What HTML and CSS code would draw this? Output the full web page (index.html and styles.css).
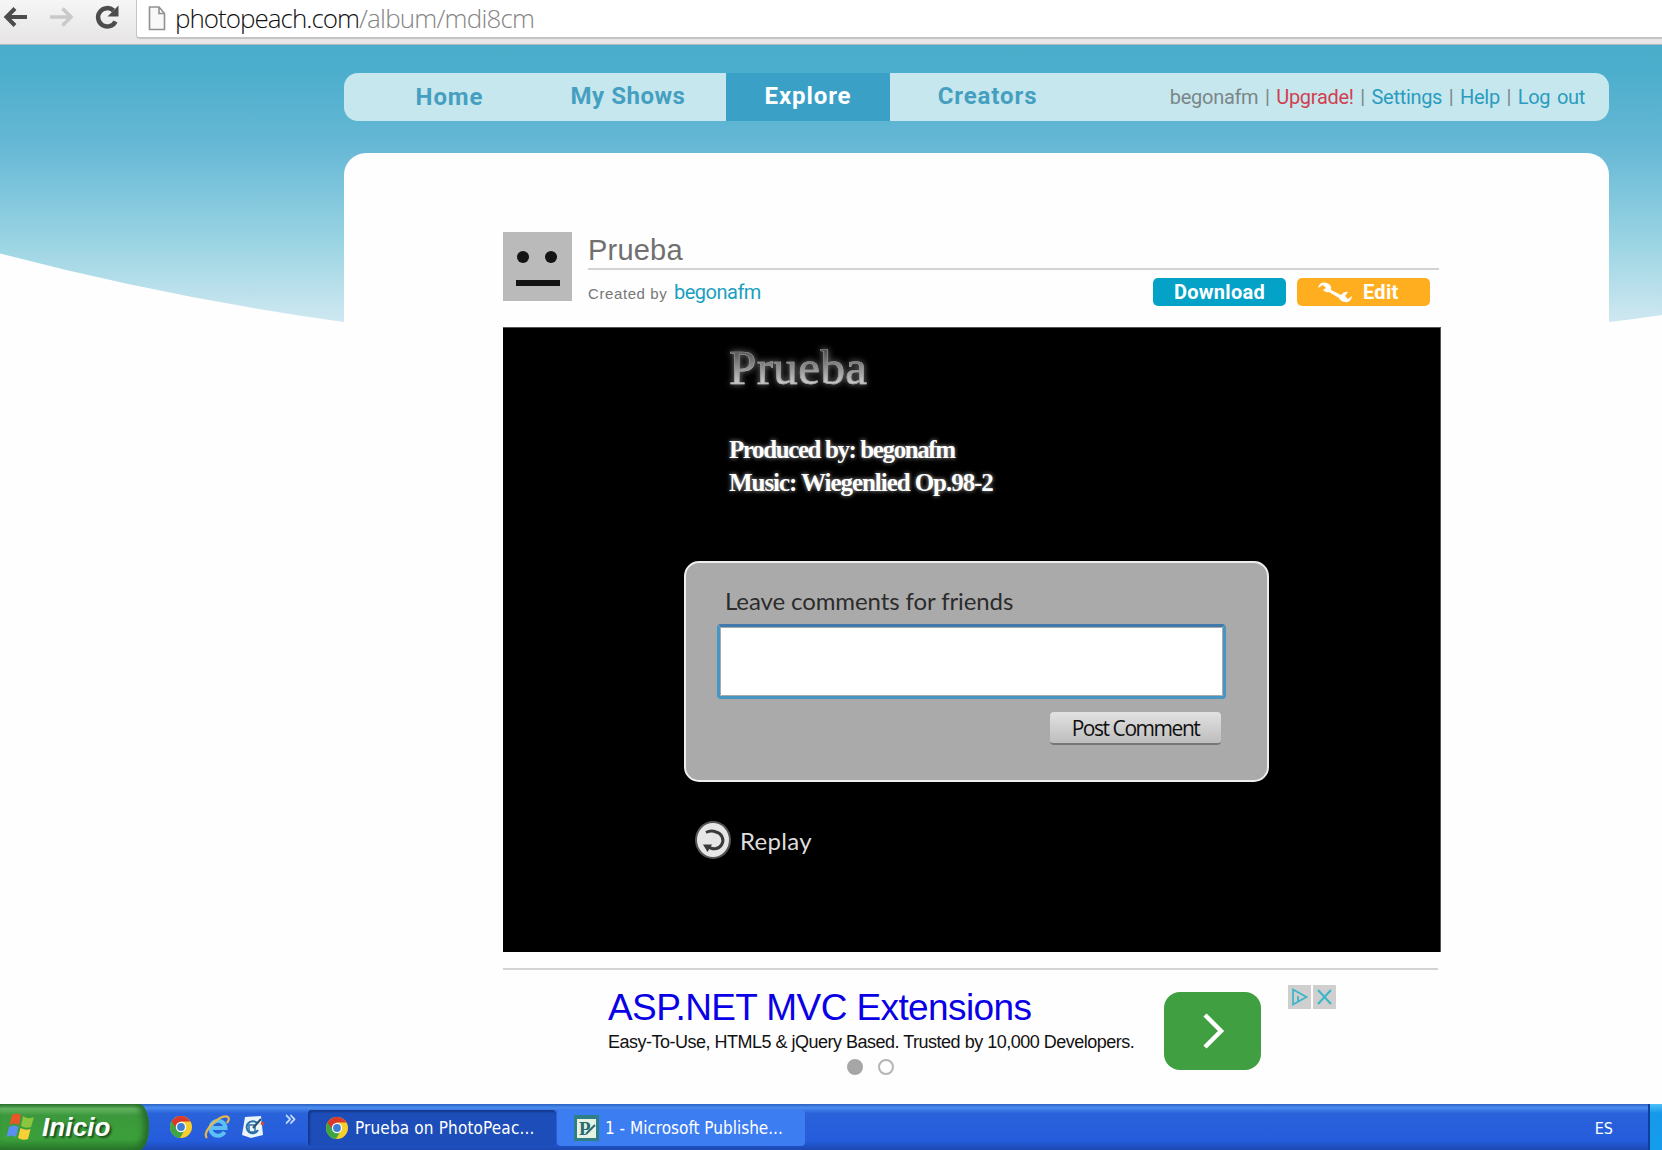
FILE: index.html
```
<!DOCTYPE html>
<html lang="en">
<head>
    <meta charset="UTF-8">
    <title>Prueba on PhotoPeach</title>
    <link rel="stylesheet" href="styles.css">
</head>
<body>
    <svg width="0" height="0" class="defs">
        <symbol id="chrome" viewBox="0 0 24 24">
            <circle cx="12" cy="12" r="11" fill="#f7cf2c"/>
            <path d="M12 12L2.500 6.500A11 11 0 0 0 11 23L16 14.500z" fill="#3fa544"/>
            <path d="M2.500 6.500A11 11 0 0 1 21.500 6.500H12L8 14z" fill="#d9392b"/>
            <circle cx="12" cy="12" r="5.200" fill="#fff"/>
            <circle cx="12" cy="12" r="3.900" fill="#3d7fd6"/>
        </symbol>
    </svg>

    <div class="browser-bar">
        <svg class="browser-icons" width="128" height="45" viewBox="0 0 128 45" fill="none">
            <path d="M27 17H7M15 8.500L6.500 17L15 25.500" stroke="#4c4c4c" stroke-width="4"/>
            <path d="M50 17H71M62.500 8.500L71 17L62.500 25.500" stroke="#c9c9c9" stroke-width="3.500"/>
            <path d="M115.500 21.500A9.200 9.200 0 1 1 113.500 10.500" stroke="#4c4c4c" stroke-width="4.500"/>
            <path d="M118.500 5.500V16.500H107.500z" fill="#4c4c4c"/>
        </svg>
        <div class="address">
            <svg width="18" height="26" viewBox="0 0 18 26"><path d="M1.500 2H11L16.500 8.500V24.500H1.500zM11 2V8.500H16.500" fill="#f8f8f8" stroke="#909090" stroke-width="1.600"/></svg>
            <span class="url">photopeach.com</span><span class="url url-path">/album/mdi8cm</span>
        </div>
    </div>

    <div class="page">
        <svg class="sky" width="1662" height="280" viewBox="0 0 1662 280">
            <defs>
                <linearGradient id="skyfill" x1="0" y1="0" x2="0" y2="1">
                    <stop offset="0" stop-color="#49aecb"/>
                    <stop offset=".1" stop-color="#4caecc"/>
                    <stop offset=".38" stop-color="#68b9d6"/>
                    <stop offset=".7" stop-color="#98d3e2"/>
                    <stop offset="1" stop-color="#cfe8f1"/>
                </linearGradient>
            </defs>
            <path d="M0 0H1662V270Q1636 274 1609 277H344Q170 253 0 208.500z" fill="url(#skyfill)"/>
        </svg>

        <div class="nav">
            <a class="tab tab-home">Home</a>
            <a class="tab tab-shows">My Shows</a>
            <a class="tab tab-explore active">Explore</a>
            <a class="tab tab-creators">Creators</a>
            <div class="user-links">begonafm | <a class="upgrade">Upgrade!</a> | <a>Settings</a> | <a>Help</a> | <a>Log out</a></div>
        </div>

        <div class="content">
            <div class="show-head">
                <svg width="69" height="69" viewBox="0 0 69 69">
                    <rect width="69" height="69" fill="#bababa"/>
                    <circle cx="20" cy="25" r="6" fill="#141414"/>
                    <circle cx="48" cy="25" r="6" fill="#141414"/>
                    <rect x="13" y="48" width="44" height="6" fill="#141414"/>
                </svg>
                <div class="show-info">
                    <h1>Prueba</h1>
                    <div class="show-meta">
                        <span class="created">Created by</span>
                        <a class="author">begonafm</a>
                        <div class="actions">
                            <button class="download">Download</button>
                            <button class="edit">
                                <svg width="36" height="22" viewBox="0 0 36 22"><path d="M1 7Q3 0 10 2Q15 4 14 9L24 14Q27 10 31 11L28 15L31 18L35 15Q34 22 28 21Q23 20 22 17L12 11Q9 12 6 9L9 7L6 4z" fill="#fff"/></svg>
                                <span>Edit</span>
                            </button>
                        </div>
                    </div>
                </div>
            </div>

            <div class="player">
                <div class="player-title">Prueba</div>
                <div class="credits">
                    <div class="produced">Produced by: begonafm</div>
                    <div class="music">Music: Wiegenlied Op.98-2</div>
                </div>
                <div class="comment-box">
                    <label>Leave comments for friends</label>
                    <textarea></textarea>
                    <button class="post">Post Comment</button>
                </div>
                <div class="replay">
                    <svg width="38" height="40" viewBox="0 0 38 40">
                        <ellipse cx="19" cy="20" rx="18" ry="19" fill="#555"/>
                        <ellipse cx="19" cy="20" rx="16" ry="17" fill="#e6e6e6"/>
                        <path d="M12 12.500Q17 10 22 12A8.500 8.500 0 1 1 14 26" fill="none" stroke="#3a3a3a" stroke-width="3"/>
                        <path d="M9 24.500H18L13.500 32z" fill="#3a3a3a"/>
                    </svg>
                    <span>Replay</span>
                </div>
            </div>

            <div class="ad">
                <div class="ad-text">
                    <a class="ad-title">ASP.NET MVC Extensions</a>
                    <div class="ad-sub">Easy-To-Use, HTML5 &amp; jQuery Based. Trusted by 10,000 Developers.</div>
                    <div class="dots"><i class="dot on"></i><i class="dot"></i></div>
                </div>
                <div class="ad-go">
                    <svg width="24" height="36" viewBox="0 0 24 36"><path d="M4 2L20 18L4 34" fill="none" stroke="#fff" stroke-width="4.500"/></svg>
                </div>
                <div class="ad-choices">
                    <svg width="23" height="24" viewBox="0 0 23 24"><rect width="23" height="24" fill="#cfcfcf"/><path d="M5 4.500L18.500 12L5 19.500zM10 11V16" fill="none" stroke="#3bb5c8" stroke-width="1.700"/></svg>
                    <svg width="23" height="24" viewBox="0 0 23 24"><rect width="23" height="24" fill="#cfcfcf"/><path d="M5 5L18 19M18 5L5 19" stroke="#3bb5c8" stroke-width="2"/></svg>
                </div>
            </div>
        </div>
    </div>

    <div class="taskbar">
        <div class="start">
            <svg width="30" height="30" viewBox="0 0 30 30">
                <path d="M6 3Q11 0 15 3L13 13Q8 10 3.500 13z" fill="#e8572a"/>
                <path d="M17 4Q22 8 28 5L25 15Q20 17 15 14z" fill="#8cc63f"/>
                <path d="M3 15Q8 12 12.500 15L10 25Q6 22 .5 25z" fill="#5b8ff0"/>
                <path d="M14.500 16Q20 19 24.500 17L22 27Q17 29 12 26z" fill="#fbcf3a"/>
            </svg>
            <span>Inicio</span>
        </div>
        <div class="quick">
            <svg width="24" height="24"><use href="#chrome"/></svg>
            <svg width="26" height="26" viewBox="0 0 26 26" fill="none">
                <path d="M20.500 18A7.500 7.500 0 1 1 21.500 14H8" stroke="#5cc0f4" stroke-width="4"/>
                <path d="M3 24Q-1 20 8 10Q19 0 24 3Q26 5 23 9" stroke="#e9b64a" stroke-width="2.200"/>
            </svg>
            <svg width="24" height="24" viewBox="0 0 24 24" fill="none">
                <path d="M4 2L20 1L22 20L10 23L1 20z" fill="#eaf5fb"/>
                <path d="M16 8A6 6 0 1 0 17 15" stroke="#2a6fa8" stroke-width="2"/>
                <path d="M8 10H14V17H8z" stroke="#2a6fa8" stroke-width="1.500"/>
                <path d="M12 13L20 4" stroke="#2b5170" stroke-width="2"/>
                <path d="M20 8L23 9" stroke="#d04a3a" stroke-width="3"/>
            </svg>
            <span class="more">»</span>
        </div>
        <div class="task current">
            <svg width="24" height="24"><use href="#chrome"/></svg>
            <span>Prueba on PhotoPeac...</span>
        </div>
        <div class="task">
            <svg width="25" height="26" viewBox="0 0 25 26">
                <rect width="25" height="26" fill="#2e7f86"/>
                <rect x="3" y="4" width="19" height="19" fill="#e6f2e4"/>
                <text x="5" y="20" font-family="Liberation Serif" font-weight="bold" font-size="19" fill="#2b6a70">P</text>
                <path d="M12 19L21 10" stroke="#2b6a70" stroke-width="2"/>
            </svg>
            <span>1 - Microsoft Publishe...</span>
        </div>
        <div class="lang">ES</div>
        <div class="tray"></div>
    </div>
</body>
</html>
```
FILE: styles.css
```
* {
    box-sizing: border-box;
}
body {
    margin: 0;
    width: 1662px;
    height: 1150px;
    display: flex;
    flex-direction: column;
    overflow: hidden;
    background: #fefefe;
    font-family: "Liberation Sans", Arial, sans-serif;
}
svg {
    display: block;
    flex: none;
}
.defs {
    position: absolute;
}
button {
    border: none;
    padding: 0;
    font-family: Roboto, sans-serif;
}

/* browser */
.browser-bar {
    height: 45px;
    flex: none;
    display: flex;
    background: linear-gradient(#f6f6f6, #e6e4e4);
    border-bottom: 1px solid #a9b9be;
}
.address {
    flex: 1;
    height: 39px;
    margin-left: 8px;
    padding-left: 11px;
    display: flex;
    align-items: flex-start;
    background: #fff;
    border: 1px solid #c4c4c4;
    border-width: 0 0 2px 1px;
    border-radius: 0 0 0 4px;
}
.address svg {
    margin: 5px 9px 0 0;
}
.url {
    font-family: "Open Sans", sans-serif;
    font-weight: 300;
    font-size: 26px;
    line-height: 36px;
    letter-spacing: -1px;
    color: #111;
}
.url-path {
    color: #858585;
    letter-spacing: -0.8px;
}

/* page */
.page {
    position: relative;
    height: 1059px;
    flex: none;
    padding: 28px 53px 0 344px;
}
.sky {
    position: absolute;
    top: 0;
    left: 0;
}
.nav {
    position: relative;
    height: 48px;
    display: flex;
    background: #c7e7ee;
    border-radius: 14px;
    line-height: 47px;
}
.tab {
    color: #459fc0;
    font-family: Roboto, sans-serif;
    font-weight: 700;
    font-size: 24px;
    letter-spacing: 0.9px;
    text-align: center;
}
.tab-home {
    width: 211px;
    line-height: 49px;
}
.tab-shows {
    width: 171px;
    padding-right: 25px;
    letter-spacing: 0.5px;
    white-space: nowrap;
}
.tab-explore {
    width: 164px;
}
.tab-creators {
    width: 195px;
}
.tab.active {
    background: #3aa0c6;
    color: #fff;
}
.user-links {
    margin-left: auto;
    padding-right: 24px;
    font-family: Roboto, sans-serif;
    font-size: 20px;
    line-height: 49px;
    letter-spacing: -0.3px;
    word-spacing: 2px;
    color: #7b8688;
    white-space: nowrap;
}
.user-links a {
    color: #2a9cbf;
}
.user-links .upgrade {
    color: #d04050;
}
.content {
    position: relative;
    margin-top: 32px;
    height: 951px;
    padding: 79px 0 0 159px;
    background: #fefefe;
    border-radius: 22px 22px 0 0;
}
.show-head {
    display: flex;
    height: 95px;
}
.show-info {
    width: 851px;
    margin-left: 16px;
}
h1 {
    margin: 0;
    height: 38px;
    border-bottom: 2px solid #d3d3d3;
    font-weight: 400;
    font-size: 29px;
    line-height: 36px;
    letter-spacing: 0.2px;
    color: #707070;
}
.show-meta {
    display: flex;
    align-items: baseline;
    height: 44px;
    padding-top: 1px;
}
.created {
    width: 86px;
    font-size: 15px;
    letter-spacing: 0.6px;
    color: #777;
    white-space: nowrap;
}
.author {
    font-family: Roboto, sans-serif;
    font-size: 20px;
    letter-spacing: -0.5px;
    color: #1a9fc0;
}
.actions {
    display: flex;
    gap: 11px;
    margin: 7px 9px 0 auto;
}
.actions button {
    width: 133px;
    height: 28px;
    border-radius: 5px;
    color: #fff;
    font-weight: 700;
    font-size: 20px;
    line-height: 28px;
    letter-spacing: 0.3px;
}
.download {
    background: #05a2c8;
}
.actions .edit {
    display: flex;
    align-items: center;
    gap: 10px;
    padding-left: 20px;
    background: #ffae20;
}

/* player */
.player {
    width: 938px;
    height: 625px;
    padding: 11px 0 0 181px;
    background: #000;
    border: 1px solid #555;
    border-width: 1px 1px 0 0;
}
.player-title {
    width: 160px;
    margin-left: 45px;
    font-family: "Liberation Serif", "Times New Roman", serif;
    font-size: 49px;
    line-height: 58px;
    letter-spacing: 0.4px;
    color: transparent;
    background: linear-gradient(#444 15%, #ddd 85%);
    -webkit-background-clip: text;
    background-clip: text;
    -webkit-text-stroke: 0.6px #999;
    filter: drop-shadow(0 0 3px #777);
}
.credits {
    margin: 36px 0 0 45px;
    font-family: "Liberation Serif", "Times New Roman", serif;
    font-weight: 700;
    font-size: 25px;
    line-height: 33px;
    color: #fff;
    text-shadow: 0 0 4px #aaa;
}
.produced {
    letter-spacing: -1.4px;
}
.music {
    letter-spacing: -1.05px;
}
.comment-box {
    width: 585px;
    height: 221px;
    margin-top: 62px;
    padding: 22px 40px 0 32px;
    display: flex;
    flex-direction: column;
    background: #aaa;
    border: 2px solid #eee;
    border-radius: 15px;
}
.comment-box label {
    padding-left: 7px;
    font-family: Lato, sans-serif;
    font-size: 24px;
    line-height: 32px;
    letter-spacing: -0.1px;
    color: #2c2c2c;
}
.comment-box textarea {
    width: 509px;
    height: 75px;
    margin: 7px 0 13px -1px;
    border: 3px solid #4795c2;
    border-top-color: #4279aa;
    border-radius: 4px;
    background: #fff;
    resize: none;
    outline: none;
    box-shadow: inset 0 0 0 1px #aaa;
    flex: none;
}
.post {
    width: 171px;
    height: 33px;
    align-self: flex-end;
    margin-right: 6px;
    background: linear-gradient(#e2e2e2, #bdbdbd);
    border-bottom: 2px solid #777;
    border-radius: 4px;
    font-family: "Open Sans", sans-serif;
    font-size: 21px;
    letter-spacing: -1.45px;
    color: #101010;
    line-height: 30px;
}
.replay {
    display: flex;
    gap: 8px;
    align-items: center;
    margin: 38px 0 0 10px;
    font-family: Lato, sans-serif;
    font-size: 24px;
    letter-spacing: 0.3px;
    color: #ddd;
}

/* ad */
.ad {
    display: flex;
    width: 935px;
    height: 110px;
    margin-top: 16px;
    padding-left: 105px;
    border-top: 2px solid #d3d3d3;
}
.ad-text {
    width: 556px;
    padding-top: 16px;
    white-space: nowrap;
}
.ad-title {
    display: block;
    font-size: 37px;
    line-height: 44px;
    letter-spacing: -0.6px;
    color: #0a00e6;
}
.ad-sub {
    font-size: 18px;
    line-height: 24px;
    letter-spacing: -0.5px;
    color: #111;
}
.dots {
    display: flex;
    gap: 15px;
    margin: 5px 0 0 239px;
}
.dot {
    width: 16px;
    height: 16px;
    border: 2px solid #b5b5b5;
    border-radius: 50%;
}
.dot.on {
    background: #a6a6a6;
    border-color: #a6a6a6;
}
.ad-go {
    width: 97px;
    height: 78px;
    margin-top: 22px;
    display: flex;
    align-items: center;
    justify-content: center;
    background: #409f40;
    border-radius: 16px;
}
.ad-choices {
    display: flex;
    gap: 2px;
    margin: 15px 0 0 27px;
}

/* taskbar */
.taskbar {
    height: 46px;
    flex: none;
    display: flex;
    background: linear-gradient(#2b62c4 0, #4a8cf0 8%, #2a62da 20%, #245cdc 80%, #1d48b0 100%);
    font-family: "DejaVu Sans Condensed", "DejaVu Sans", sans-serif;
    color: #fff;
}
.start {
    width: 149px;
    display: flex;
    align-items: center;
    gap: 6px;
    padding-left: 6px;
    background: linear-gradient(#2f7d31 0, #66b563 10%, #3c983c 25%, #3aa03a 75%, #2c7a2d 100%);
    border-radius: 0 10px 10px 0 / 0 23px 23px 0;
    box-shadow: inset -5px 0 6px #246b28;
}
.start span {
    font-family: "Liberation Sans", Arial, sans-serif;
    font-size: 26px;
    font-style: italic;
    font-weight: 700;
    letter-spacing: 0.1px;
    text-shadow: 2px 2px 2px #1f4f20;
}
.quick {
    width: 159px;
    display: flex;
    align-items: center;
    gap: 11px;
    padding-left: 20px;
}
.more {
    margin: -18px 0 0 8px;
    font-size: 23px;
    color: #cfe0ff;
}
.task {
    width: 248px;
    height: 36px;
    margin: 6px 1px 0 0;
    padding-left: 17px;
    display: flex;
    align-items: center;
    gap: 6px;
    background: #3c7df2;
    border-radius: 4px;
    font-size: 17px;
    white-space: nowrap;
}
.task.current {
    background: #1d4db8;
    box-shadow: inset 2px 2px 2px #16388c;
    line-height: 38px;
    letter-spacing: 0.15px;
}
.lang {
    margin-left: auto;
    padding-right: 35px;
    font-size: 16px;
    line-height: 50px;
}
.tray {
    width: 14px;
    background: linear-gradient(#4fc0f8, #149ae8 20%, #159ceb);
    border-left: 2px solid #0f3f9c;
}
```
